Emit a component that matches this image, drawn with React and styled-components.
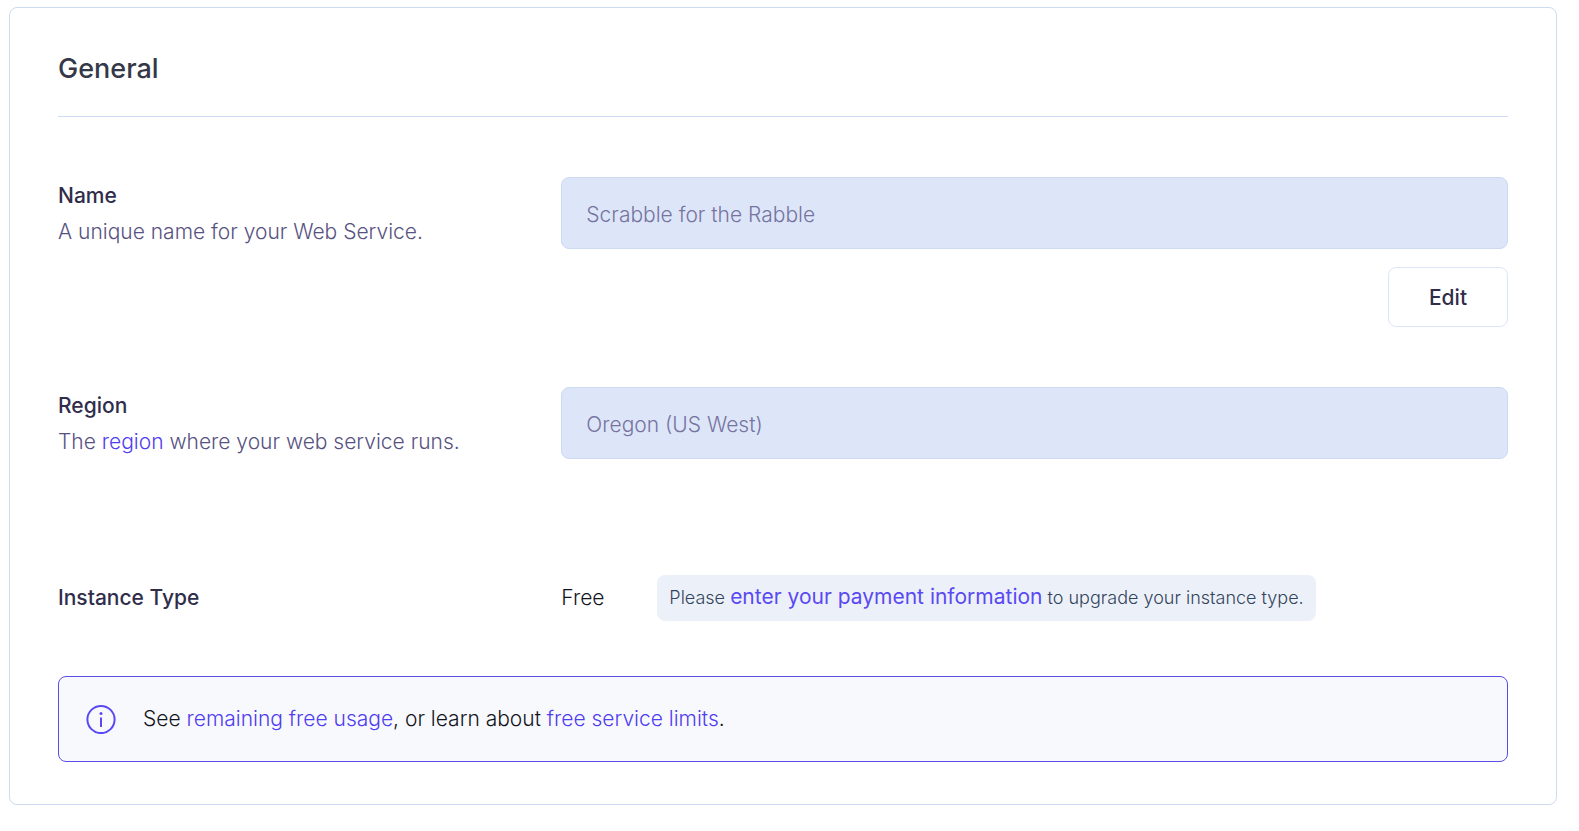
import React from "react";
import styled, { createGlobalStyle, css } from "styled-components";

const GlobalStyle = createGlobalStyle`
  *, *::before, *::after { box-sizing: border-box; }
  body {
    margin: 0;
    background: #fff;
    color: #14151c;
    font: 300 21px/36px Inter, "Liberation Sans", sans-serif;
  }
`;

const Page = styled.main`
  padding: 7px 22px 24px 9px;
`;

const Card = styled.section`
  padding: 43px 48px 42px;
  border: 1px solid #cddcf0;
  border-radius: 8px;
`;

const CardHeader = styled.header`
  padding-bottom: 29px;
  margin-bottom: 60px;
  border-bottom: 1px solid #cddcf0;
`;

const CardTitle = styled.h2`
  margin: 0;
  color: #353849;
  font-size: 27px;
  font-weight: 500;
`;

const SettingRow = styled.div`
  display: grid;
  grid-template-columns: 1fr 2fr;
  column-gap: 30px;
  align-items: ${(p) => (p.$centered ? "center" : "start")};
  margin-bottom: ${(p) => p.$space}px;
`;

const SettingInfo = styled.div`
  padding-top: 1px;
`;

const labelText = css`
  display: block;
  margin: 0;
  color: #302d4b;
  font-size: 21px;
  font-weight: 500;
`;

const FieldLabel = styled.label`
  ${labelText}
`;

const SettingTitle = styled.h3`
  ${labelText}
`;

const Description = styled.p`
  margin: 0;
  color: #57527f;
`;

const Link = styled.a`
  color: #4f3df0;
  font-size: 21px;
  line-height: 24px;
  text-decoration: none;
  &:hover { text-decoration: underline; }
`;

const Control = styled.div`
  display: flex;
  flex-direction: column;
  align-items: flex-end;
  gap: 18px;
`;

const TextField = styled.input`
  width: 100%;
  height: 72px;
  padding: 2px 24px 0;
  border: 1px solid #cddaf1;
  border-radius: 8px;
  background: #dde6f9;
  color: #77739f;
  font: inherit;
`;

const EditButton = styled.button`
  width: 120px;
  height: 60px;
  padding: 2px 0 0;
  border: 1px solid #dde6f9;
  border-radius: 8px;
  background: #fff;
  color: #302d4b;
  font: inherit;
  font-weight: 500;
  cursor: pointer;
`;

const Plan = styled.div`
  display: flex;
  align-items: center;
`;

const PlanName = styled.span`
  min-width: 96px;
`;

const UpgradeNote = styled.p`
  margin: 0;
  padding: 5px 12px;
  border-radius: 8px;
  background: #ecf1f9;
  color: #33445c;
  font-size: 18px;

  ${Link} {
    color: #5a49f2;
    font-weight: 400;
  }
`;

const Notice = styled.aside`
  display: flex;
  align-items: center;
  gap: 27px;
  padding: 24px 27px;
  border: 1px solid #5b4de6;
  border-radius: 8px;
  background: #f8f9fd;
`;

const NoticeText = styled.p`
  margin: 0;
`;

const Icon = styled.svg`
  flex: none;
  width: 30px;
  height: 30px;
  color: #5a49f2;
`;

function InfoIcon() {
  return (
    <Icon viewBox="0 0 30 30" fill="none" stroke="currentColor" strokeWidth="2" aria-hidden="true">
      <circle cx="15" cy="15.5" r="13.6" />
      <path d="M15 13.5v9.5" />
      <circle cx="15" cy="9.5" r="1.5" fill="currentColor" stroke="none" />
    </Icon>
  );
}

export default function App() {
  return (
    <>
      <GlobalStyle />
      <Page>
        <Card>
          <CardHeader>
            <CardTitle>General</CardTitle>
          </CardHeader>

          <SettingRow $space={60}>
            <SettingInfo>
              <FieldLabel htmlFor="service-name">Name</FieldLabel>
              <Description>A unique name for your Web Service.</Description>
            </SettingInfo>
            <Control>
              <TextField id="service-name" type="text" readOnly value="Scrabble for the Rabble" />
              <EditButton type="button">Edit</EditButton>
            </Control>
          </SettingRow>

          <SettingRow $space={115}>
            <SettingInfo>
              <FieldLabel htmlFor="service-region">Region</FieldLabel>
              <Description>
                The <Link href="#regions">region</Link> where your web service runs.
              </Description>
            </SettingInfo>
            <Control>
              <TextField id="service-region" type="text" readOnly value="Oregon (US West)" />
            </Control>
          </SettingRow>

          <SettingRow $space={55} $centered>
            <SettingTitle>Instance Type</SettingTitle>
            <Plan>
              <PlanName>Free</PlanName>
              <UpgradeNote>
                Please <Link href="#billing">enter your payment information</Link> to upgrade your instance type.
              </UpgradeNote>
            </Plan>
          </SettingRow>

          <Notice>
            <InfoIcon />
            <NoticeText>
              See <Link href="#usage">remaining free usage</Link>, or learn about{" "}
              <Link href="#limits">free service limits</Link>.
            </NoticeText>
          </Notice>
        </Card>
      </Page>
    </>
  );
}
